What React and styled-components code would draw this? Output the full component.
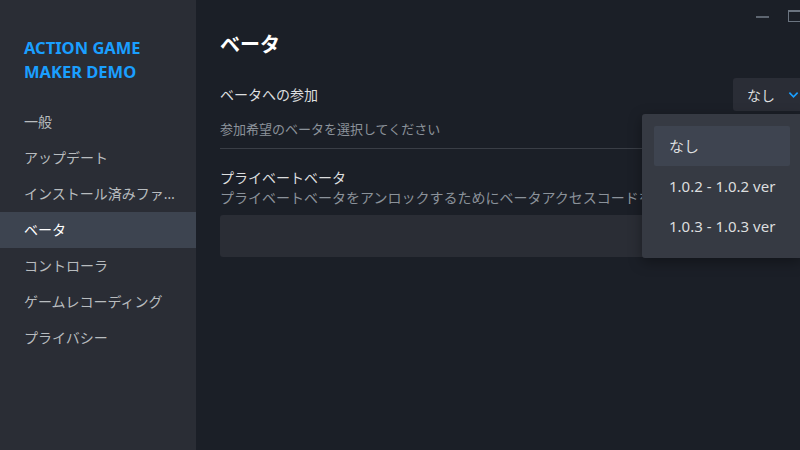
import React from 'react'
import styled, { createGlobalStyle } from 'styled-components'

const GlobalStyle = createGlobalStyle`
  html, body {
    margin: 0;
    padding: 0;
    background: #1b1f27;
  }
  body {
    font-family: 'Noto Sans', 'Noto Sans CJK JP', sans-serif;
  }
`

const navItems = [
  '一般',
  'アップデート',
  'インストール済みファイル',
  'ベータ',
  'コントローラ',
  'ゲームレコーディング',
  'プライバシー',
]

const options = ['なし', '1.0.2 - 1.0.2 ver', '1.0.3 - 1.0.3 ver']

export default function App() {
  return (
    <Window>
      <GlobalStyle />
      <Sidebar>
        <GameTitle>ACTION GAME MAKER DEMO</GameTitle>
        <Nav>
          {navItems.map((item) => (
            <NavItem key={item} active={item === 'ベータ'}>
              {item}
            </NavItem>
          ))}
        </Nav>
      </Sidebar>

      <Main>
        <TitleBar>
          <Minimize />
          <Maximize />
        </TitleBar>

        <Content>
          <Heading>ベータ</Heading>

          <SettingRow>
            <Label>ベータへの参加</Label>
            <SelectButton>
              なし
              <Chevron viewBox="0 0 12 8">
                <path d="M1.5 1.5 L6 6 L10.5 1.5" fill="none" stroke="#1a9fff" strokeWidth="1.8" />
              </Chevron>
            </SelectButton>
            <Menu>
              {options.map((opt, i) => (
                <MenuItem key={opt} active={i === 0}>
                  {opt}
                </MenuItem>
              ))}
            </Menu>
          </SettingRow>
          <Description spaced>参加希望のベータを選択してください</Description>
          <Divider />

          <Section>
            <Label>プライベートベータ</Label>
            <Description large>
              プライベートベータをアンロックするためにベータアクセスコードを入力してください
            </Description>
            <CodeInput />
          </Section>
        </Content>
      </Main>
    </Window>
  )
}

const Window = styled.div`
  display: flex;
  width: 100vw;
  height: 100vh;
  overflow: hidden;
  background: #1b1f27;
`

const Sidebar = styled.aside`
  display: flex;
  flex-direction: column;
  flex: 0 0 196px;
  width: 196px;
  padding-top: 36px;
  background: #2a2d35;
`

const GameTitle = styled.h1`
  margin: 0;
  padding: 0 24px;
  font-size: 16.5px;
  font-weight: 700;
  line-height: 24px;
  color: #1a9fff;
`

const Nav = styled.nav`
  display: flex;
  flex-direction: column;
  margin-top: 20px;
`

const NavItem = styled.div`
  height: 36px;
  line-height: 36px;
  padding: 0 14px 0 24px;
  font-size: 14px;
  white-space: nowrap;
  overflow: hidden;
  text-overflow: ellipsis;
  color: ${({ active }) => (active ? '#ffffff' : '#b8bcbf')};
  background: ${({ active }) => (active ? '#3d4450' : 'transparent')};
`

const Main = styled.main`
  display: flex;
  flex-direction: column;
  flex: 1;
  min-width: 0;
  overflow: hidden;
`

const TitleBar = styled.div`
  display: flex;
  justify-content: flex-end;
  align-items: flex-start;
  gap: 19px;
  height: 31px;
  margin-right: -8px;
`

const Minimize = styled.div`
  width: 13px;
  height: 2px;
  margin-top: 16px;
  background: #5d6570;
`

const Maximize = styled.div`
  width: 18px;
  height: 9px;
  margin-top: 10px;
  border: 1.5px solid #6b7480;
  border-top-width: 2.5px;
`

const Content = styled.div`
  display: flex;
  flex-direction: column;
  padding-left: 24px;
  margin-right: -10px;
`

const Heading = styled.h2`
  margin: 0 0 19px;
  font-size: 20px;
  font-weight: 700;
  line-height: 28px;
  color: #ffffff;
`

const SettingRow = styled.div`
  position: relative;
  display: flex;
  justify-content: space-between;
  align-items: center;
  height: 33px;
`

const Label = styled.div`
  font-size: 14px;
  line-height: 18px;
  color: #dcdedf;
`

const SelectButton = styled.div`
  display: flex;
  align-items: center;
  gap: 13px;
  height: 33px;
  padding: 0 11px 0 14px;
  box-sizing: border-box;
  border-radius: 3px;
  background: #2a2d36;
  font-size: 14px;
  color: #dcdedf;
`

const Chevron = styled.svg`
  width: 11px;
  height: 8px;
`

const Menu = styled.div`
  position: absolute;
  top: 36px;
  right: 8px;
  z-index: 2;
  display: flex;
  flex-direction: column;
  width: 160px;
  padding: 12px;
  box-sizing: border-box;
  border-radius: 3px;
  background: #363a43;
  box-shadow: 0 4px 14px rgba(0, 0, 0, 0.35);
`

const MenuItem = styled.div`
  height: 40px;
  line-height: 40px;
  padding: 0 15px;
  font-size: 15px;
  white-space: nowrap;
  color: #dcdedf;
  background: ${({ active }) => (active ? '#3e4450' : 'transparent')};
  border-radius: 2px;
`

const Description = styled.div`
  margin-top: ${({ spaced }) => (spaced ? '9px' : '0')};
  font-size: ${({ large }) => (large ? '14px' : '13px')};
  line-height: 18px;
  color: #8b929a;
  white-space: nowrap;
  overflow: hidden;
`

const Divider = styled.hr`
  width: 100%;
  height: 1px;
  margin: 10px 0 0;
  border: 0;
  background: #3a3e46;
`

const Section = styled.div`
  display: flex;
  flex-direction: column;
  margin-top: 20px;
  margin-right: 24px;

  ${Description} {
    margin-top: 2px;
  }
`

const CodeInput = styled.div`
  height: 42px;
  margin-top: 8px;
  border-radius: 3px;
  background: #2a2d35;
`
